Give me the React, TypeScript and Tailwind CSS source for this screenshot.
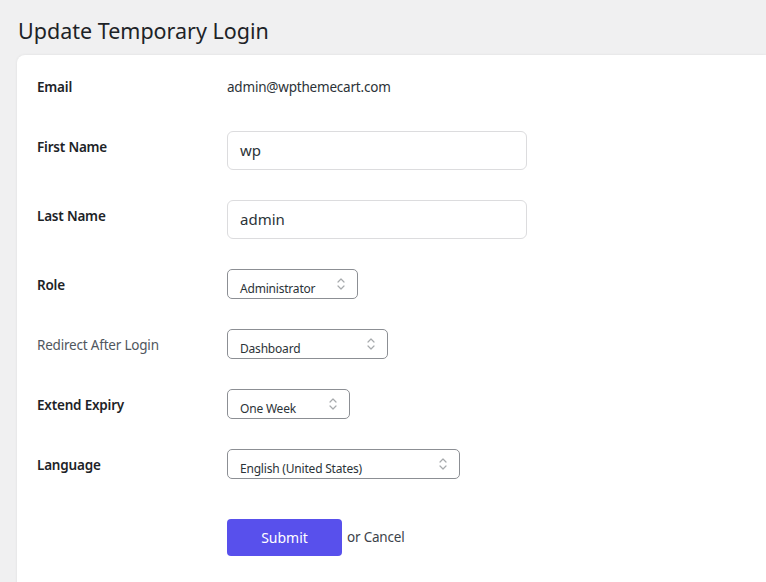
import type { ReactNode } from 'react'

function Chevrons() {
  return (
    <svg width="10" height="14" viewBox="0 0 10 14" fill="none" className="shrink-0">
      <path d="M2 5 L5 2 L8 5" stroke="#a7aaad" strokeWidth="1.2" strokeLinecap="round" strokeLinejoin="round" />
      <path d="M2 9 L5 12 L8 9" stroke="#a7aaad" strokeWidth="1.2" strokeLinecap="round" strokeLinejoin="round" />
    </svg>
  )
}

function Select({ value, width }: { value: string; width: string }) {
  return (
    <div
      className={`${width} flex h-[30px] items-center justify-between rounded-[5px] border border-[#8c8f94] bg-white pl-[12px] pr-[11px]`}
    >
      <span className="pt-[10px] text-[12px] tracking-[-0.2px] text-[#2c3338]">{value}</span>
      <Chevrons />
    </div>
  )
}

function TextInput({ value }: { value: string }) {
  return (
    <div className="flex h-[39px] w-[300px] items-center rounded-[6px] border border-[#dcdcde] bg-white px-[12px] text-[15px] text-[#2c3338]">
      {value}
    </div>
  )
}

function Row({ label, bold = true, children }: { label: string; bold?: boolean; children: ReactNode }) {
  return (
    <div className="flex items-start">
      <div
        className={`w-[190px] shrink-0 pt-[6px] text-[13.5px] leading-5 tracking-[-0.2px] ${
          bold ? 'font-semibold text-[#1d2327]' : 'font-normal text-[#50575e]'
        }`}
      >
        {label}
      </div>
      {children}
    </div>
  )
}

export default function App() {
  return (
    <div className="h-[582px] w-[766px] overflow-hidden bg-[#f0f0f1] pl-[17px]" style={{ fontFamily: '"Noto Sans", "Open Sans", sans-serif' }}>
      <h1 className="mb-[8px] pl-[1px] pt-[15px] text-[21.5px] leading-[32px] font-normal text-[#1d2327]">
        Update Temporary Login
      </h1>
      <div className="h-[600px] rounded-tl-[8px] bg-white pl-[20px] pt-[18px] shadow-[0_0_3px_rgba(0,0,0,0.08)]">
        <div className="flex flex-col gap-[30px]">
          <div className="flex h-[28px] items-center text-[13.5px] tracking-[-0.2px]">
            <div className="w-[190px] shrink-0 font-semibold text-[#1d2327]">Email</div>
            <div className="text-[#2c3338]">admin@wpthemecart.com</div>
          </div>
          <Row label="First Name">
            <TextInput value="wp" />
          </Row>
          <Row label="Last Name">
            <TextInput value="admin" />
          </Row>
          <Row label="Role">
            <Select value="Administrator" width="w-[131px]" />
          </Row>
          <Row label="Redirect After Login" bold={false}>
            <Select value="Dashboard" width="w-[161px]" />
          </Row>
          <Row label="Extend Expiry">
            <Select value="One Week" width="w-[123px]" />
          </Row>
          <Row label="Language">
            <Select value="English (United States)" width="w-[233px]" />
          </Row>
          <div className="mt-[10px] flex items-center pl-[190px]">
            <button className="h-[37px] w-[115px] rounded-[4px] bg-[#5850ec] text-[14px] font-normal text-white">
              Submit
            </button>
            <span className="ml-[5px] text-[13.5px] tracking-[-0.2px] text-[#3c434a]">or Cancel</span>
          </div>
        </div>
      </div>
    </div>
  )
}
